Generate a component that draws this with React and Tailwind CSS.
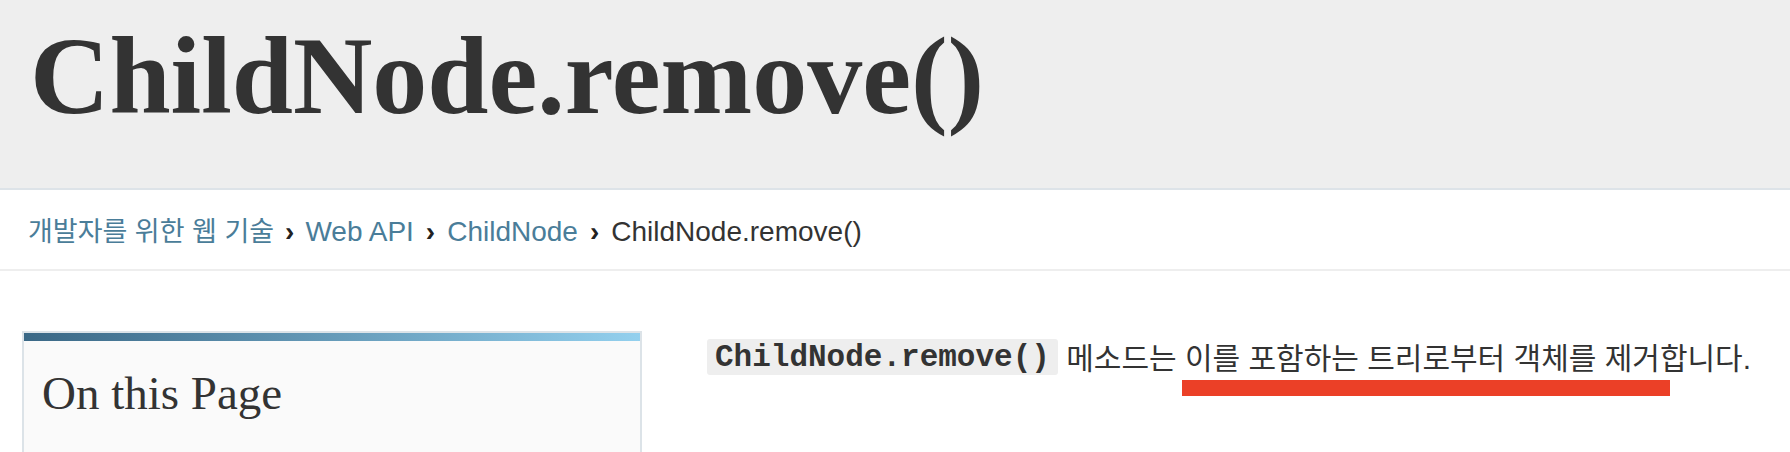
import React from "react";

export default function App() {
  return (
    <div className="w-[1790px] h-[452px] overflow-hidden bg-white text-[#333]">
      {/* Title header */}
      <header className="h-[190px] bg-[#eeeeee] border-b-2 border-[#dde3e8] pt-[21px] pl-[30px]">
        <h1
          className="text-[110px] leading-none font-bold text-[#333] whitespace-nowrap"
          style={{ fontFamily: '"Liberation Serif", serif' }}
        >
          ChildNode.remove()
        </h1>
      </header>

      {/* Breadcrumbs */}
      <nav
        className="h-[81px] border-b-2 border-[#eeeeee] pt-[28px] pl-[28px] text-[28px] leading-[28px] whitespace-nowrap"
        style={{ fontFamily: '"Liberation Sans", "Noto Sans CJK KR", sans-serif' }}
      >
        <a className="text-[#4a7d99] text-[27px]">개발자를 위한 웹 기술</a>
        <span className="mx-[11px] font-bold text-[#222]">›</span>
        <a className="text-[#4a7d99]">Web API</a>
        <span className="mx-[12px] font-bold text-[#222]">›</span>
        <a className="text-[#4a7d99]">ChildNode</a>
        <span className="mx-[12px] font-bold text-[#222]">›</span>
        <span className="text-[#333]">ChildNode.remove()</span>
      </nav>

      {/* Main */}
      <main className="relative flex gap-[65px] pl-[22px]">
        <aside className="mt-[60px] w-[620px] h-[220px] shrink-0 border-2 border-[#dce3e8] bg-[#fafafa]">
          <div className="h-[8px] bg-gradient-to-r from-[#3a6886] to-[#93d0ee]" />
          <h2
            className="pt-[29px] pl-[18px] text-[47px] leading-[47px] font-normal text-[#333]"
            style={{ fontFamily: '"Liberation Serif", serif' }}
          >
            On this Page
          </h2>
        </aside>

        <div className="relative mt-[68px] flex-1">
          <p
            className="text-[30px] leading-[36px] text-[#333] whitespace-nowrap"
            style={{ fontFamily: '"Liberation Sans", "Noto Sans CJK KR", sans-serif' }}
          >
            <code
              className="inline-block h-[36px] leading-[38px] px-[8px] rounded-[3px] bg-[#eeeeee] font-bold text-[31px] text-[#333] align-top"
              style={{ fontFamily: '"Liberation Mono", monospace' }}
            >
              ChildNode.remove()
            </code>{" "}
            <span className="relative top-[2px]">메소드는 이를 포함하는 트리로부터 객체를 제거합니다.</span>
          </p>
          <div className="absolute left-[475px] top-[41px] w-[488px] h-[16px] bg-[#eb4027]" />
        </div>
      </main>
    </div>
  );
}
